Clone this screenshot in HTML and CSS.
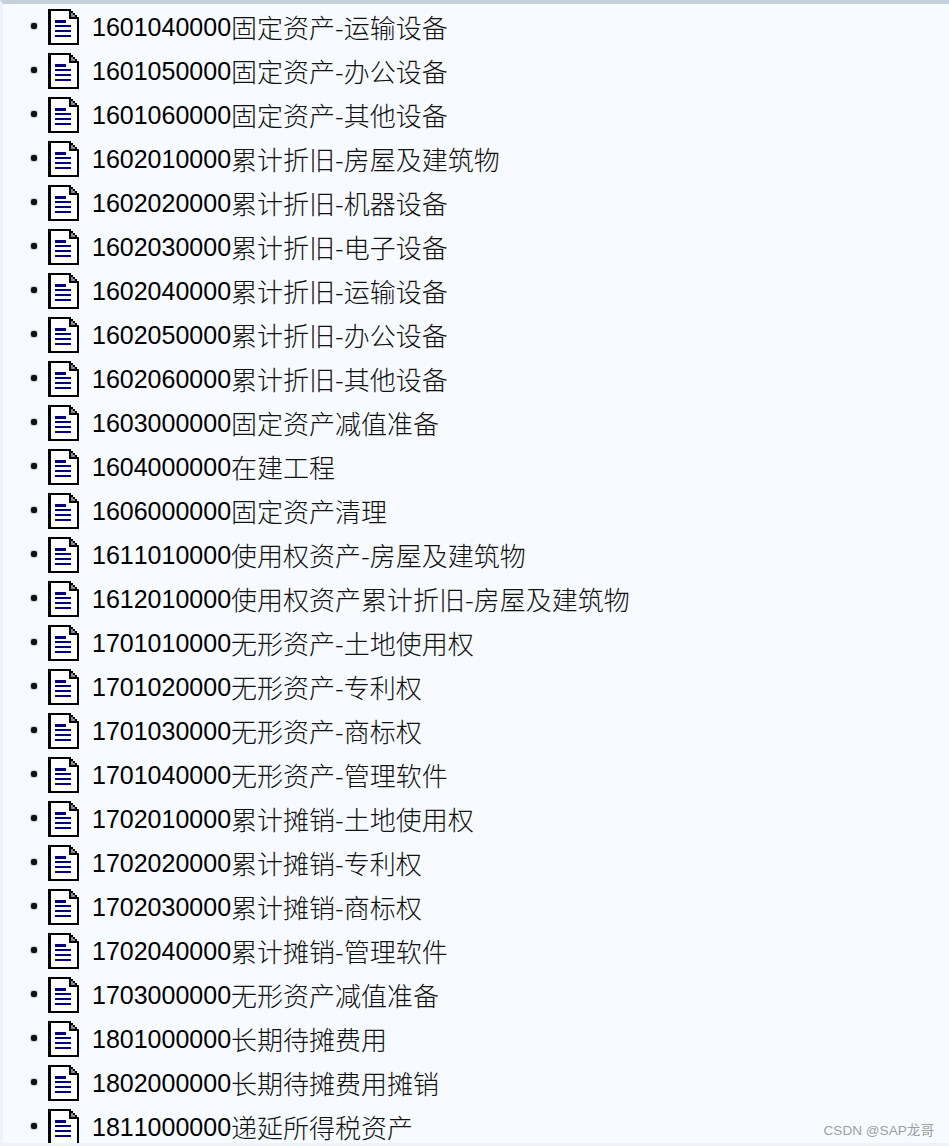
FILE: index.html
```html
<!DOCTYPE html>
<html lang="zh">
<head>
<meta charset="utf-8">
<title>科目列表</title>
<link rel="stylesheet" href="styles.css">
</head>
<body>
<svg class="defs" width="0" height="0" aria-hidden="true">
<symbol id="doc" viewBox="0 0 32 36" shape-rendering="crispEdges">
<path d="M0 0H23V2H25V4H27V6H29V8H31V36H0Z" fill="#000"/>
<path d="M3 2H21V10H29V34H3Z" fill="#fff"/>
<path d="M23 4H25V6H27V8H23Z" fill="#8a8a8a"/>
<path d="M7 11H18V13.500H7ZM7 16H23V18H7ZM7 21H23V23H7ZM7 26H23V28H7Z" fill="#000080"/>
</symbol>
</svg>
<main class="tree">
<div class="row"><span class="dot"></span><svg class="doc"><use href="#doc"/></svg><span class="code">1601040000</span><span class="name">固定资产-运输设备</span></div>
<div class="row"><span class="dot"></span><svg class="doc"><use href="#doc"/></svg><span class="code">1601050000</span><span class="name">固定资产-办公设备</span></div>
<div class="row"><span class="dot"></span><svg class="doc"><use href="#doc"/></svg><span class="code">1601060000</span><span class="name">固定资产-其他设备</span></div>
<div class="row"><span class="dot"></span><svg class="doc"><use href="#doc"/></svg><span class="code">1602010000</span><span class="name">累计折旧-房屋及建筑物</span></div>
<div class="row"><span class="dot"></span><svg class="doc"><use href="#doc"/></svg><span class="code">1602020000</span><span class="name">累计折旧-机器设备</span></div>
<div class="row"><span class="dot"></span><svg class="doc"><use href="#doc"/></svg><span class="code">1602030000</span><span class="name">累计折旧-电子设备</span></div>
<div class="row"><span class="dot"></span><svg class="doc"><use href="#doc"/></svg><span class="code">1602040000</span><span class="name">累计折旧-运输设备</span></div>
<div class="row"><span class="dot"></span><svg class="doc"><use href="#doc"/></svg><span class="code">1602050000</span><span class="name">累计折旧-办公设备</span></div>
<div class="row"><span class="dot"></span><svg class="doc"><use href="#doc"/></svg><span class="code">1602060000</span><span class="name">累计折旧-其他设备</span></div>
<div class="row"><span class="dot"></span><svg class="doc"><use href="#doc"/></svg><span class="code">1603000000</span><span class="name">固定资产减值准备</span></div>
<div class="row"><span class="dot"></span><svg class="doc"><use href="#doc"/></svg><span class="code">1604000000</span><span class="name">在建工程</span></div>
<div class="row"><span class="dot"></span><svg class="doc"><use href="#doc"/></svg><span class="code">1606000000</span><span class="name">固定资产清理</span></div>
<div class="row"><span class="dot"></span><svg class="doc"><use href="#doc"/></svg><span class="code">1611010000</span><span class="name">使用权资产-房屋及建筑物</span></div>
<div class="row"><span class="dot"></span><svg class="doc"><use href="#doc"/></svg><span class="code">1612010000</span><span class="name">使用权资产累计折旧-房屋及建筑物</span></div>
<div class="row"><span class="dot"></span><svg class="doc"><use href="#doc"/></svg><span class="code">1701010000</span><span class="name">无形资产-土地使用权</span></div>
<div class="row"><span class="dot"></span><svg class="doc"><use href="#doc"/></svg><span class="code">1701020000</span><span class="name">无形资产-专利权</span></div>
<div class="row"><span class="dot"></span><svg class="doc"><use href="#doc"/></svg><span class="code">1701030000</span><span class="name">无形资产-商标权</span></div>
<div class="row"><span class="dot"></span><svg class="doc"><use href="#doc"/></svg><span class="code">1701040000</span><span class="name">无形资产-管理软件</span></div>
<div class="row"><span class="dot"></span><svg class="doc"><use href="#doc"/></svg><span class="code">1702010000</span><span class="name">累计摊销-土地使用权</span></div>
<div class="row"><span class="dot"></span><svg class="doc"><use href="#doc"/></svg><span class="code">1702020000</span><span class="name">累计摊销-专利权</span></div>
<div class="row"><span class="dot"></span><svg class="doc"><use href="#doc"/></svg><span class="code">1702030000</span><span class="name">累计摊销-商标权</span></div>
<div class="row"><span class="dot"></span><svg class="doc"><use href="#doc"/></svg><span class="code">1702040000</span><span class="name">累计摊销-管理软件</span></div>
<div class="row"><span class="dot"></span><svg class="doc"><use href="#doc"/></svg><span class="code">1703000000</span><span class="name">无形资产减值准备</span></div>
<div class="row"><span class="dot"></span><svg class="doc"><use href="#doc"/></svg><span class="code">1801000000</span><span class="name">长期待摊费用</span></div>
<div class="row"><span class="dot"></span><svg class="doc"><use href="#doc"/></svg><span class="code">1802000000</span><span class="name">长期待摊费用摊销</span></div>
<div class="row"><span class="dot"></span><svg class="doc"><use href="#doc"/></svg><span class="code">1811000000</span><span class="name">递延所得税资产</span></div>
</main>
<div class="mark">CSDN @SAP龙哥</div>
</body>
</html>
```
FILE: styles.css
```css
html, body {
  margin: 0;
  height: 100%;
  overflow: hidden;
}
body {
  background: #f7faff;
  position: relative;
  box-sizing: border-box;
  border-top: 4px solid #c4d0dc;
  border-left: 3px solid #eef3f9;
  font-family: "Liberation Sans", "Noto Sans CJK SC", sans-serif;
}
body::after {
  content: "";
  position: absolute;
  left: 0;
  right: 0;
  bottom: 0;
  height: 3px;
  background: #eef3f9;
}
.defs {
  position: absolute;
}
.tree {
  display: flex;
  flex-direction: column;
  padding: 1px 0 0 28px;
}
.row {
  height: 44px;
  flex: none;
  display: flex;
  align-items: center;
  white-space: nowrap;
}
.dot {
  width: 6px;
  height: 6px;
  margin-bottom: 2px;
  border-radius: 2px;
  background: #111;
  box-shadow: 0 0 1px 1px #c8ccd2;
  flex: none;
}
.doc {
  width: 32px;
  height: 36px;
  margin-left: 11px;
  flex: none;
}
.code {
  width: 139px;
  margin-left: 12px;
  font-size: 25px;
  font-kerning: none;
  color: #000;
  flex: none;
}
.name {
  padding-bottom: 2px;
  font-family: "Noto Sans CJK SC", sans-serif;
  font-weight: 300;
  font-size: 26px;
  color: #111;
}
.mark {
  position: absolute;
  right: 15px;
  bottom: 7px;
  font-size: 13.6px;
  color: #a0a0a0;
}
```
